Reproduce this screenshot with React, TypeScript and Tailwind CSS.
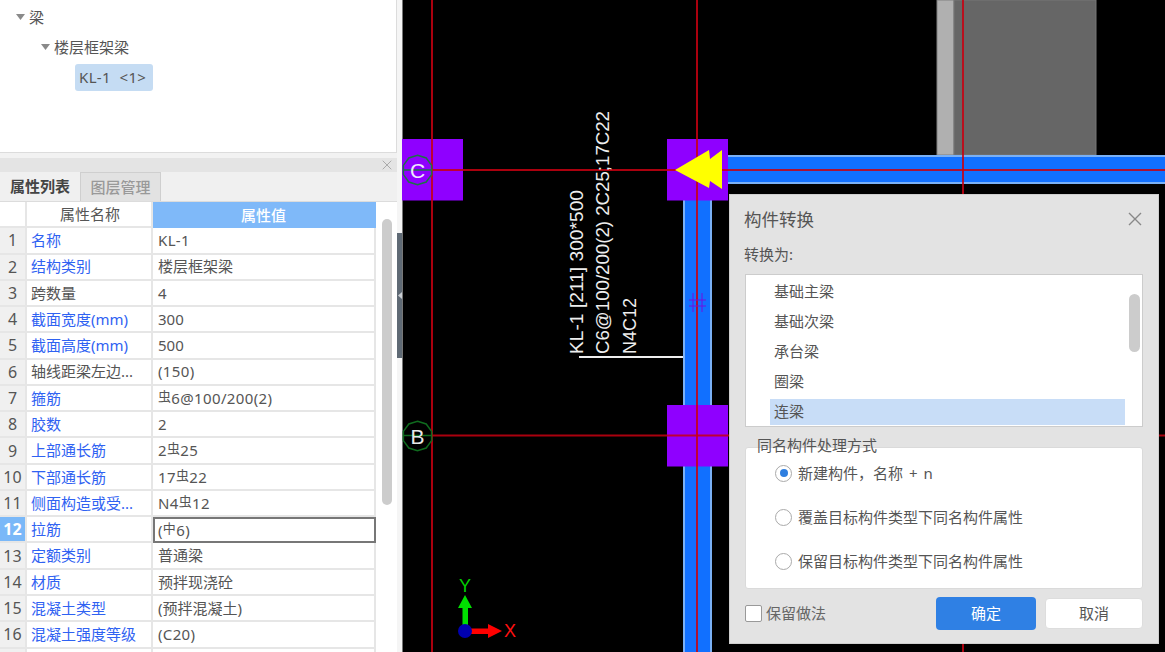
const font = "font-['Noto_Sans','Noto_Sans_CJK_SC',sans-serif]";

// 钢筋符号 (rebar grade mark), raised a little above the digits around it
function Mark({ ch }: { ch: string }) {
  return <span className="relative top-[-3px] text-[13px]">{ch}</span>;
}

function Num({ children }: { children: React.ReactNode }) {
  return <span className="tracking-[0.35px]">{children}</span>;
}

const rows: { name: string; blue: boolean; value: React.ReactNode }[] = [
  { name: "名称", blue: true, value: <Num>KL-1</Num> },
  { name: "结构类别", blue: true, value: "楼层框架梁" },
  { name: "跨数量", blue: false, value: "4" },
  { name: "截面宽度(mm)", blue: true, value: "300" },
  { name: "截面高度(mm)", blue: true, value: "500" },
  { name: "轴线距梁左边...", blue: false, value: <Num>(150)</Num> },
  { name: "箍筋", blue: true, value: <Num><Mark ch="虫" />6@100/200(2)</Num> },
  { name: "胶数", blue: true, value: "2" },
  { name: "上部通长筋", blue: true, value: <Num>2<Mark ch="虫" />25</Num> },
  { name: "下部通长筋", blue: true, value: <Num>17<Mark ch="虫" />22</Num> },
  { name: "侧面构造或受...", blue: true, value: <Num>N4<Mark ch="虫" />12</Num> },
  { name: "拉筋", blue: true, value: <Num>(<Mark ch="中" />6)</Num> },
  { name: "定额类别", blue: true, value: "普通梁" },
  { name: "材质", blue: true, value: "预拌现浇砼" },
  { name: "混凝土类型", blue: true, value: "(预拌混凝土)" },
  { name: "混凝土强度等级", blue: true, value: <Num>(C20)</Num> },
  { name: "", blue: false, value: "" },
];

function Caret() {
  return (
    <svg width="9" height="6" viewBox="0 0 9 6" className="shrink-0">
      <path d="M0 0h9L4.5 6z" fill="#8a8a8a" />
    </svg>
  );
}

function Cross({ size, color }: { size: number; color: string }) {
  return (
    <svg width={size} height={size} viewBox="0 0 14 14" className="shrink-0">
      <path d="M1 1l12 12M13 1L1 13" stroke={color} strokeWidth="1.4" fill="none" />
    </svg>
  );
}

function Tree() {
  return (
    <div className="h-[153px] border-r border-b border-[#dcdcdc] bg-white pt-[2px] text-[15px] text-[#555]">
      <div className="flex h-[30px] items-center gap-[4px] pl-[16px]">
        <Caret />
        <span>梁</span>
      </div>
      <div className="flex h-[30px] items-center gap-[4px] pl-[41px]">
        <Caret />
        <span>楼层框架梁</span>
      </div>
      <div className="pl-[75px] pt-[2px]">
        <div className="flex h-[27px] w-[78px] items-center whitespace-pre rounded-[3px] bg-[#c5dcf3] pl-[4px] tracking-[0.35px]">
          {"KL-1  <1>"}
        </div>
      </div>
    </div>
  );
}

function Table() {
  return (
    <div className="grid w-[376px] grid-cols-[27px_126px_223px] auto-rows-[26.27px] text-[15px] text-[#555]">
      <div className="border-r-2 border-b-2 border-[#e6e6e6]" />
      <div className="flex items-center justify-center border-r-2 border-b-2 border-[#e6e6e6] pl-[2px]">属性名称</div>
      <div className="flex items-center justify-center bg-[#7fb9f9] pr-[2px] font-medium text-white">属性值</div>
      {rows.map((r, i) => {
        const active = i === 11;
        return (
          <div key={i} className="contents">
            <div
              className={
                active
                  ? "flex items-center justify-center border-r-2 border-b-2 border-[#e6e6e6] bg-[#7ab8f8] text-[16px] font-bold text-white"
                  : "flex items-center justify-center border-r-2 border-b-2 border-[#e6e6e6] bg-[#f0f0f0] text-[16px] text-[#555]"
              }
            >
              {r.name || r.value ? i + 1 : ""}
            </div>
            <div
              className={
                r.blue
                  ? "flex items-center border-r-2 border-b-2 border-[#e6e6e6] pl-[4px] whitespace-nowrap text-[#2f62f2]"
                  : "flex items-center border-r-2 border-b-2 border-[#e6e6e6] pl-[4px] whitespace-nowrap"
              }
            >
              {r.name}
            </div>
            <div
              className={
                active
                  ? "flex items-center border-2 border-[#777] pl-[3px] whitespace-nowrap"
                  : "flex items-center border-r-2 border-b-2 border-[#e6e6e6] pl-[5px] whitespace-nowrap"
              }
            >
              {r.value}
            </div>
          </div>
        );
      })}
    </div>
  );
}

function Sidebar() {
  return (
    <aside className="flex h-full w-[397px] shrink-0 flex-col overflow-hidden bg-white">
      <Tree />
      <div className="h-[5px] shrink-0 bg-[#f2f2f2]" />
      <div className="flex h-[14px] shrink-0 items-center justify-end bg-[#e4e4e4] pr-[5px]">
        <Cross size={10} color="#aaaaaa" />
      </div>
      <div className="flex h-[30px] shrink-0 border-b border-[#dcdcdc] bg-[#f0f0f0] text-[15px]">
        <div className="flex w-[80px] items-center justify-center font-bold text-[#444]">属性列表</div>
        <div className="flex w-[81px] items-center justify-center border border-b-0 border-[#cfcfcf] bg-[#e2e2e2] font-medium text-[#999]">
          图层管理
        </div>
      </div>
      <div className="flex min-h-0 flex-1">
        <Table />
        <div className="flex flex-1 justify-center pt-[17px]">
          <div className="h-[286px] w-[10px] rounded-full bg-[#cccccc]" />
        </div>
      </div>
    </aside>
  );
}

function Splitter() {
  return (
    <div className="flex h-full w-[5px] shrink-0 flex-col bg-[#f5f5f5] pt-[233px]">
      <div className="flex h-[125px] w-[5px] items-center justify-center bg-[#5f6a75]">
        <svg width="4" height="7" viewBox="0 0 4 7">
          <path d="M0 3.5 4 0v7z" fill="#c9ced3" />
        </svg>
      </div>
    </div>
  );
}

// axis bubble outline: a rough circle, as the CAD view tessellates it
function bubble(cx: number, cy: number) {
  const pts: string[] = [];
  for (let i = 0; i < 10; i++) {
    const a = (i / 10) * Math.PI * 2 - Math.PI / 2;
    pts.push(`${(cx + 14.8 * Math.cos(a)).toFixed(1)},${(cy + 14.8 * Math.sin(a)).toFixed(1)}`);
  }
  return pts.join(" ");
}

// The model view: plan drawing in page coordinates
function Drawing() {
  const redLine = { stroke: "#c80010", strokeOpacity: 0.85, strokeWidth: 2 };
  return (
    <svg width="763" height="652" viewBox="402 0 763 652" className="block font-['Liberation_Sans',sans-serif]">
      <rect x="402" width="763" height="652" fill="#000" />
      <rect x="402" width="1" height="652" fill="#777" />

      {/* column in the background */}
      <rect x="937" width="17" height="155" fill="#b0b0b0" stroke="#808080" />
      <rect x="954" width="142" height="155" fill="#666" stroke="#777" />

      {/* beams */}
      <rect x="683" y="200" width="29" height="452" fill="#7ab0f5" />
      <rect x="685" y="200" width="25" height="452" fill="#1170ff" />
      <rect x="728" y="155" width="437" height="29" fill="#7ab0f5" />
      <rect x="728" y="157" width="437" height="25" fill="#1170ff" />

      {/* columns */}
      <rect x="402" y="139" width="61" height="61.5" fill="#8f00ff" />
      <rect x="667" y="139" width="61" height="61.5" fill="#8f00ff" />
      <rect x="667" y="405" width="61" height="61.5" fill="#8f00ff" />

      {/* axis lines */}
      <line x1="432" y1="0" x2="432" y2="652" {...redLine} />
      <line x1="697" y1="0" x2="697" y2="652" {...redLine} />
      <line x1="963" y1="0" x2="963" y2="652" {...redLine} />
      <line x1="432" y1="170" x2="1165" y2="170" {...redLine} />
      <line x1="432" y1="435.5" x2="1165" y2="435.5" {...redLine} />

      {/* axis bubbles */}
      <polygon points={bubble(417.5, 170)} fill="none" stroke="#1e7048" strokeWidth="1.5" />
      <line x1="403" y1="170" x2="432" y2="170" stroke="#1e7048" strokeWidth="1.5" />
      <text x="417.5" y="177.5" textAnchor="middle" fontSize="21" fill="#f0e8ff">C</text>
      <polygon points={bubble(417.5, 436)} fill="none" stroke="#0f6a1e" strokeWidth="1.5" />
      <line x1="403" y1="435.5" x2="432" y2="435.5" stroke="#0f6a1e" strokeWidth="1.5" />
      <text x="417.5" y="443.5" textAnchor="middle" fontSize="21" fill="#e8e8e8">B</text>

      {/* direction arrow */}
      <polygon points="675,170 709,150 710,159 722,150 722,189 710,181 709,188" fill="#ffff00" />

      {/* section mark */}
      <path d="M689 300h17M689 306h17M693 293v19M702 293v19" stroke="#7010e0" strokeWidth="1" fill="none" />

      {/* beam annotation */}
      <line x1="579" y1="357" x2="683" y2="357" stroke="#eeeeee" strokeWidth="2" />
      <g fontSize="19" fill="#eeeeee">
        <text transform="rotate(-90 583 354)" x="583" y="354" textLength="164" lengthAdjust="spacingAndGlyphs">
          KL-1 [211] 300*500
        </text>
        <text transform="rotate(-90 609 354)" x="609" y="354" textLength="243" lengthAdjust="spacingAndGlyphs">
          C6@100/200(2) 2C25;17C22
        </text>
        <text transform="rotate(-90 636 354)" x="636" y="354" textLength="56" lengthAdjust="spacingAndGlyphs">
          N4C12
        </text>
      </g>

      {/* UCS icon */}
      <rect x="462.5" y="606" width="5.5" height="22" fill="#00e000" />
      <polygon points="465,595 472,608 458,608" fill="#00e000" />
      <rect x="470" y="628.5" width="19" height="5.5" fill="#ff0000" />
      <polygon points="502,631 488,624 488,638" fill="#ff0000" />
      <circle cx="465" cy="631" r="7" fill="#0000b0" />
      <text x="465" y="592" textAnchor="middle" fontSize="18" fill="#00d000">Y</text>
      <text x="510" y="637" textAnchor="middle" fontSize="18" fill="#ff1010">X</text>
    </svg>
  );
}

function Radio({ checked, label }: { checked?: boolean; label: string }) {
  return (
    <div className="flex h-[44px] items-center gap-[6px] pb-[8px]">
      <span className="flex h-[17px] w-[17px] shrink-0 items-center justify-center rounded-full border border-[#aaa] bg-white">
        {checked && <span className="h-[8px] w-[8px] rounded-full bg-[#2f7fe0]" />}
      </span>
      <span className="whitespace-pre text-[#555] [word-spacing:2px]">{label}</span>
    </div>
  );
}

function ConvertDialog() {
  const types = ["基础主梁", "基础次梁", "承台梁", "圈梁", "连梁"];
  return (
    <div className="absolute left-[327px] top-[194px] flex h-[450px] w-[430px] flex-col border border-[#cfcfcf] bg-[#e3e3e3] px-[15px] text-[15px] text-[#555]">
      <div className="flex h-[48px] shrink-0 items-center justify-between pr-[1px]">
        <span className="-ml-[1px] text-[17.5px]">构件转换</span>
        <Cross size={14} color="#888888" />
      </div>
      <div className="-ml-[1px] flex h-[31px] shrink-0 items-center pb-[9px]">转换为:</div>
      <div className="relative h-[153px] w-[398px] shrink-0 overflow-hidden border border-[#cccccc] bg-white pt-[2px]">
        {types.map((t, i) => (
          <div key={t} className="flex h-[30px] items-center pl-[24px]">
            <span className={i === 4 ? "flex h-[26px] w-[355px] items-center bg-[#c8ddf7] pb-[2px] pl-[4px]" : "pb-[2px] pl-[4px]"}>
              {t}
            </span>
          </div>
        ))}
        <div className="absolute left-[383px] top-[19px] h-[58px] w-[11px] rounded-full bg-[#cccccc]" />
      </div>
      <div className="relative mt-[20px] h-[142px] w-[398px] shrink-0 rounded-[3px] border border-[#dadada] bg-white pl-[29px] pt-[7px]">
        <span className="absolute -top-[14px] left-[11px]">同名构件处理方式</span>
        <Radio checked label="新建构件，名称 + n" />
        <Radio label="覆盖目标构件类型下同名构件属性" />
        <Radio label="保留目标构件类型下同名构件属性" />
      </div>
      <div className="mt-[8px] flex h-[33px] w-[398px] shrink-0 items-center">
        <span className="h-[17px] w-[17px] rounded-[2px] border border-[#999] bg-white" />
        <span className="ml-[4px] text-[#666]">保留做法</span>
        <button className="ml-auto h-[33px] w-[100px] rounded-[4px] bg-[#2f80e4] text-white">确定</button>
        <button className="ml-[9px] h-[31px] w-[98px] rounded-[4px] border border-[#dddddd] bg-white">取消</button>
      </div>
    </div>
  );
}

export default function App() {
  return (
    <div className={`flex h-[652px] w-[1165px] overflow-hidden ${font}`}>
      <Sidebar />
      <Splitter />
      <main className="relative h-full flex-1 overflow-hidden bg-black">
        <Drawing />
        <ConvertDialog />
      </main>
    </div>
  );
}
